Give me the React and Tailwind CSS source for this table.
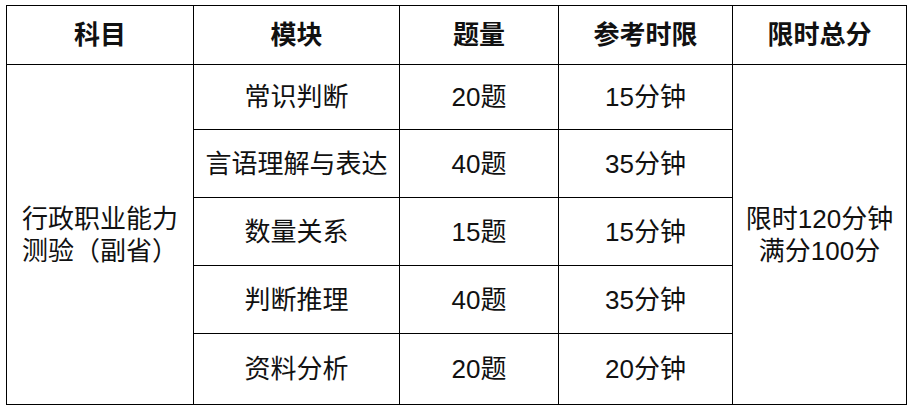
import React from 'react';

const rows = [
  { module: '常识判断', count: '20题', time: '15分钟', h: 'h-[65px]' },
  { module: '言语理解与表达', count: '40题', time: '35分钟', h: 'h-[68px]' },
  { module: '数量关系', count: '15题', time: '15分钟', h: 'h-[68px]' },
  { module: '判断推理', count: '40题', time: '35分钟', h: 'h-[68px]' },
  { module: '资料分析', count: '20题', time: '20分钟', h: 'h-[71px]' },
];

const cell = 'flex items-center justify-center border-r border-b border-black text-center';

const App = () => {
  return (
    <div className="w-[913px] h-[410px] bg-white pt-[5px] pl-[6px] text-[#111] font-['Liberation_Sans','Noto_Sans_CJK_SC',sans-serif]">
      <div className="grid w-[901px] grid-cols-[187px_206px_159px_174px_174px] grid-rows-[59px_65px_68px_68px_68px_71px] border-l border-t border-black text-[26px] leading-[32px]">
        {/* Header */}
        {['科目', '模块', '题量', '参考时限', '限时总分'].map((t) => (
          <div key={t} className={`${cell} font-bold`}>{t}</div>
        ))}

        {/* Subject, spans all rows */}
        <div className={`${cell} row-start-2 row-span-5 col-start-1 flex-col`}>
          <span>行政职业能力</span>
          <span>测验（副省）</span>
        </div>

        {rows.map((r, i) => (
          <React.Fragment key={r.module}>
            <div className={`${cell} col-start-2`} style={{ gridRowStart: i + 2 }}>{r.module}</div>
            <div className={`${cell} col-start-3`} style={{ gridRowStart: i + 2 }}>{r.count}</div>
            <div className={`${cell} col-start-4`} style={{ gridRowStart: i + 2 }}>{r.time}</div>
          </React.Fragment>
        ))}

        {/* Total */}
        <div className={`${cell} row-start-2 row-span-5 col-start-5 flex-col`}>
          <span>限时120分钟</span>
          <span>满分100分</span>
        </div>
      </div>
    </div>
  );
};

export default App;
